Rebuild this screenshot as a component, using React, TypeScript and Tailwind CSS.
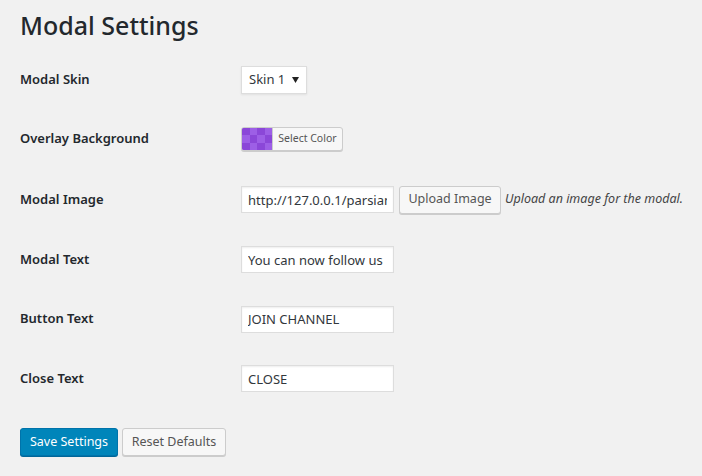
import type { ReactNode } from 'react';

const font = { fontFamily: '"Noto Sans", "Open Sans", sans-serif' };

function Row({ label, height, children }: { label: string; height: string; children: ReactNode }) {
    return (
        <div className={`flex items-center ${height}`}>
            <div className="w-[221px] shrink-0 text-[13px] font-semibold text-[#23282d]">{label}</div>
            <div className="flex items-center whitespace-nowrap">{children}</div>
        </div>
    );
}

function TextInput({ value }: { value: string }) {
    return (
        <input
            type="text"
            defaultValue={value}
            readOnly
            className="w-[153px] h-[27px] px-[6px] bg-white border border-[#ddd] shadow-[inset_0_1px_2px_rgba(0,0,0,0.07)] text-[13px] text-[#32373c] outline-none"
        />
    );
}

export default function App() {
    return (
        <div className="min-h-[476px] bg-[#f1f1f1] px-[20px] pt-[6px]" style={font}>
            <h1 className="text-[25px] font-medium text-[#23282d] leading-[38px]">Modal Settings</h1>

            <div className="mt-[6px]">
                <Row label="Modal Skin" height="h-[59px]">
                    <div className="flex items-center justify-between w-[66px] h-[28px] pl-[7px] pr-[7px] bg-white border border-[#ddd] shadow-[0_1px_2px_rgba(0,0,0,0.07)] text-[13px] text-[#32373c]">
                        <span>Skin 1</span>
                        <svg width="7" height="6" viewBox="0 0 7 6">
                            <path d="M0 0h7L3.5 6z" fill="#222" />
                        </svg>
                    </div>
                </Row>

                <Row label="Overlay Background" height="h-[60px]">
                    <div className="flex w-[102px] h-[24px] border border-[#ccc] rounded-[3px] overflow-hidden shadow-[0_1px_0_#ccc] bg-[#f7f7f7]">
                        <div className="w-[30px] h-full bg-[#9353df] grid grid-cols-4 grid-rows-3 shrink-0">
                            {Array.from({ length: 12 }).map((_, i) => (
                                <div
                                    key={i}
                                    className={(Math.floor(i / 4) + i) % 2 === 0 ? 'bg-[#8b47d8]' : 'bg-[#9d5fe6]'}
                                />
                            ))}
                        </div>
                        <div className="flex flex-1 items-center justify-center border-l border-[#ccc] text-[10.5px] text-[#555]">Select Color</div>
                    </div>
                </Row>

                <Row label="Modal Image" height="h-[61px]">
                    <TextInput value="http://127.0.0.1/parsian/wp-content/uploads/modal.png" />
                    <button className="ml-[5px] w-[102px] h-[28px] bg-[#f7f7f7] border border-[#ccc] rounded-[3px] shadow-[0_1px_0_#ccc] text-[12.5px] text-[#555]">
                        Upload Image
                    </button>
                    <span className="ml-[4px] text-[12.5px] italic text-[#444]">Upload an image for the modal.</span>
                </Row>

                <Row label="Modal Text" height="h-[59px]">
                    <TextInput value="You can now follow us" />
                </Row>

                <Row label="Button Text" height="h-[60px]">
                    <TextInput value="JOIN CHANNEL" />
                </Row>

                <Row label="Close Text" height="h-[59px]">
                    <TextInput value="CLOSE" />
                </Row>
            </div>

            <div className="flex gap-[4px] mt-[20px]">
                <button className="w-[98px] h-[28px] bg-[#0085ba] border border-[#0073aa] rounded-[3px] shadow-[0_1px_0_#006799] text-[12.5px] text-white">
                    Save Settings
                </button>
                <button className="w-[104px] h-[28px] bg-[#f7f7f7] border border-[#ccc] rounded-[3px] shadow-[0_1px_0_#ccc] text-[12.5px] text-[#555]">
                    Reset Defaults
                </button>
            </div>
        </div>
    );
}
